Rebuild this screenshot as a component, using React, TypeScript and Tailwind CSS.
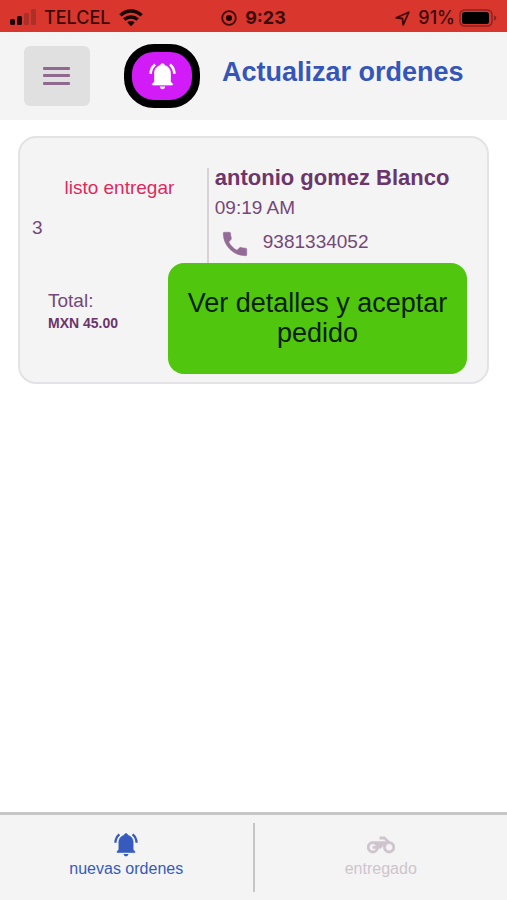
import type { ReactNode } from 'react';

interface Order {
  id: number;
  status: string;
  customer: string;
  time: string;
  phone: string;
  total: string;
}

const orders: Order[] = [
  {
    id: 3,
    status: 'listo entregar',
    customer: 'antonio gomez Blanco',
    time: '09:19 AM',
    phone: '9381334052',
    total: 'MXN 45.00',
  },
];

const BellIcon = ({ className }: { className: string }) => (
  <svg viewBox="0 0 27 27" className={className} fill="currentColor" aria-hidden="true">
    <path
      d="M13.5.6c1.1 0 1.900.8 2 1.900 3.700.9 6 3.900 6 7.700v7.600c0 1.300.8 2 1.900 2.900.6.5.4 1.300-.5 1.300H4.100c-.9 0-1.100-.8-.5-1.300 1.100-.9 1.900-1.600 1.900-2.900v-7.600c0-3.800 2.300-6.800 6-7.700.1-1.100.9-1.900 2-1.900z"
      stroke="currentColor"
      strokeWidth="0.7"
    />
    <path d="M10.800 23.600h5.400c-.2 1.600-1.300 2.600-2.700 2.600s-2.500-1-2.700-2.600z" />
    <path d="M1.600 10.900C1.700 7.300 3.100 4 6.100 1.600M25.400 10.900C25.300 7.300 23.900 4 20.900 1.600" fill="none" stroke="currentColor" strokeWidth="2.600" />
  </svg>
);

const PhoneIcon = () => (
  <svg viewBox="0 0 24 24" className="size-8" fill="currentColor" aria-hidden="true">
    <path
      d="M7.300 10.500c1.440 2.700 3.500 4.800 6.200 6.200l1.900-1.900c.27-.27.67-.36 1.020-.24 1.120.37 2.330.57 3.570.57.55 0 .8.45.8 1V20c0 .55-.25.8-.8.8-9.300 0-16.800-7.500-16.800-16.800 0-.55.25-.8.800-.8h3.700c.55 0 1 .25 1 .8 0 1.250.2 2.450.57 3.570.11.35.03.74-.25 1.020z"
      stroke="currentColor"
      strokeWidth="0.4"
      strokeLinejoin="round"
    />
  </svg>
);

const MotorcycleIcon = () => (
  <svg viewBox="0 0 24 24" className="size-7" fill="currentColor" stroke="currentColor" strokeWidth="0.4" aria-hidden="true">
    <path d="M19.44 9.03L15.41 5H11v2h3.59l2 2H5c-2.8 0-5 2.2-5 5s2.2 5 5 5c2.46 0 4.45-1.69 4.9-4h1.65l2.77-2.77c-.21.54-.32 1.14-.32 1.77 0 2.8 2.2 5 5 5s5-2.2 5-5c0-2.65-1.97-4.77-4.56-4.97zM7.82 15C7.4 16.15 6.28 17 5 17c-1.63 0-3-1.37-3-3s1.37-3 3-3c1.28 0 2.4.85 2.82 2H5v2h2.82zM19 17c-1.66 0-3-1.34-3-3s1.34-3 3-3 3 1.34 3 3-1.34 3-3 3z" />
  </svg>
);

function StatusBar() {
  return (
    <div className="grid h-8 grid-cols-[1fr_auto_1fr] items-center bg-[#d9362e] px-2.5 pt-1 font-['Inter',sans-serif] text-lg leading-none text-[#3d0a08]">
      <div className="flex items-center gap-2">
        <svg width="26" height="18" viewBox="0 0 26 18" aria-hidden="true">
          <rect x="0" y="10" width="5" height="6" rx="1.5" fill="#1a0404" />
          <rect x="7" y="7" width="5" height="9" rx="1.5" fill="#1a0404" />
          <rect x="14" y="4" width="5" height="12" rx="1.5" fill="#ad2f29" />
          <rect x="21" y="0" width="5" height="16" rx="1.5" fill="#ad2f29" />
        </svg>
        <span className="font-medium">TELCEL</span>
        <svg width="24" height="18" viewBox="0 0 24 18" fill="none" stroke="#1a0404" strokeWidth="3.4" aria-hidden="true">
          <path d="M1.4 6.4C7.4.6 16.600.6 22.600 6.400" />
          <path d="M5.300 10.600c3.800-3.500 9.600-3.500 13.400 0" />
          <path d="M12 17.200l-3.700-3.800c2.100-1.800 5.300-1.800 7.400 0z" fill="#1a0404" stroke="none" />
        </svg>
      </div>
      <div className="flex items-center gap-2">
        <svg width="16" height="16" viewBox="0 0 16 16" fill="none" aria-hidden="true">
          <circle cx="8" cy="8" r="6.800" stroke="#3d0a08" strokeWidth="1.800" />
          <circle cx="8" cy="8" r="3" fill="#1a0404" />
        </svg>
        <span className="font-bold">9:23</span>
      </div>
      <div className="flex items-center justify-end gap-1">
        <svg width="15" height="15" viewBox="0 0 15 15" className="mr-1" fill="none" stroke="#3d0a08" strokeWidth="1.800" strokeLinejoin="round" aria-hidden="true">
          <path d="M13.800 1.200L1.200 6.800l6.300.7.700 6.300z" />
        </svg>
        <span className="font-medium">91%</span>
        <svg width="38" height="18" viewBox="0 0 38 18" fill="none" aria-hidden="true">
          <rect x="1" y="1" width="32" height="16" rx="4.500" stroke="#8f211c" strokeWidth="1.500" />
          <rect x="3" y="3" width="27" height="12" rx="2.500" fill="#000" />
          <path d="M35 6.500c1.800.6 2.300 1.500 2.300 2.500s-.5 1.900-2.300 2.500z" fill="#8f211c" />
        </svg>
      </div>
    </div>
  );
}

function Header() {
  return (
    <header className="flex h-22 items-center bg-[#f4f4f4] px-6">
      <button
        type="button"
        aria-label="Menú"
        className="flex h-[60px] w-[66px] items-center justify-center rounded-md bg-[#e0e0e0] text-[#91688f]"
      >
        <svg width="28" height="20" viewBox="0 0 28 20" fill="currentColor" aria-hidden="true">
          <rect x="0" y="1" width="27" height="3" rx="1" />
          <rect x="0" y="8" width="27" height="3" rx="1" />
          <rect x="0" y="16" width="27" height="3" rx="1" />
        </svg>
      </button>
      <button
        type="button"
        aria-label="Notificaciones"
        className="ml-[34px] flex h-16 w-[76px] items-center justify-center rounded-[30px] border-8 border-black bg-[#d11cf8] text-white"
      >
        <BellIcon className="size-[27px]" />
      </button>
      <h1 className="mb-2 ml-[22px] text-[27px] leading-8 font-bold text-[#3556b8]">Actualizar ordenes</h1>
    </header>
  );
}

function OrderCard({ order }: { order: Order }) {
  return (
    <article className="rounded-[18px] border-2 border-[#e3e3e5] bg-[#f4f4f4] pt-[30px] text-[19px] leading-6 text-[#75487a]">
      <div className="flex">
        <div className="w-2/5 pt-2 pl-3">
          <p className="text-center text-[#e0285f]">{order.status}</p>
          <p className="mt-4">{order.id}</p>
        </div>
        <div className="flex-1 border-l-2 border-[#d8d2d8] pl-1.5">
          <h2 className="text-[22px] leading-5 font-bold whitespace-nowrap text-[#6c356b]">{order.customer}</h2>
          <p className="mt-2">{order.time}</p>
          <p className="flex h-[43px] items-center gap-3 pl-1">
            <span className="mt-1 text-[#946b97]">
              <PhoneIcon />
            </span>
            {order.phone}
          </p>
        </div>
      </div>
      <div className="flex pr-5 pb-2 pl-7">
        <div className="w-[120px] pt-[26px]">
          <p>Total:</p>
          <p className="text-sm font-bold text-[#6c356b]">{order.total}</p>
        </div>
        <button
          type="button"
          className="min-h-[111px] flex-1 rounded-2xl bg-[#50c60e] px-4 pb-[2px] text-[27px] leading-[30px] text-[#0b1f04]"
        >
          Ver detalles y aceptar pedido
        </button>
      </div>
    </article>
  );
}

function NavTab({ icon, label, active }: { icon: ReactNode; label: string; active?: boolean }) {
  return (
    <a
      href="#"
      aria-current={active ? 'page' : undefined}
      className={`flex flex-1 flex-col items-center pt-2 leading-5 ${active ? 'text-[#365bbd]' : 'text-[#cfc4cd]'}`}
    >
      <span className="flex h-7 items-center">{icon}</span>
      {label}
    </a>
  );
}

export default function App() {
  return (
    <div className="flex min-h-screen flex-col bg-white font-['Liberation_Sans',Arial,sans-serif]">
      <StatusBar />
      <Header />
      <main className="flex-1 px-[18px] pt-4">
        {orders.map(order => (
          <OrderCard key={order.id} order={order} />
        ))}
      </main>
      <nav className="flex border-t-3 border-[#c6c6c6] bg-[#f4f4f4] pt-2 pb-2">
        <NavTab icon={<BellIcon className="size-6" />} label="nuevas ordenes" active />
        <div className="h-[69px] w-0.5 bg-[#c6c6c6]" />
        <NavTab icon={<MotorcycleIcon />} label="entregado" />
      </nav>
    </div>
  );
}
